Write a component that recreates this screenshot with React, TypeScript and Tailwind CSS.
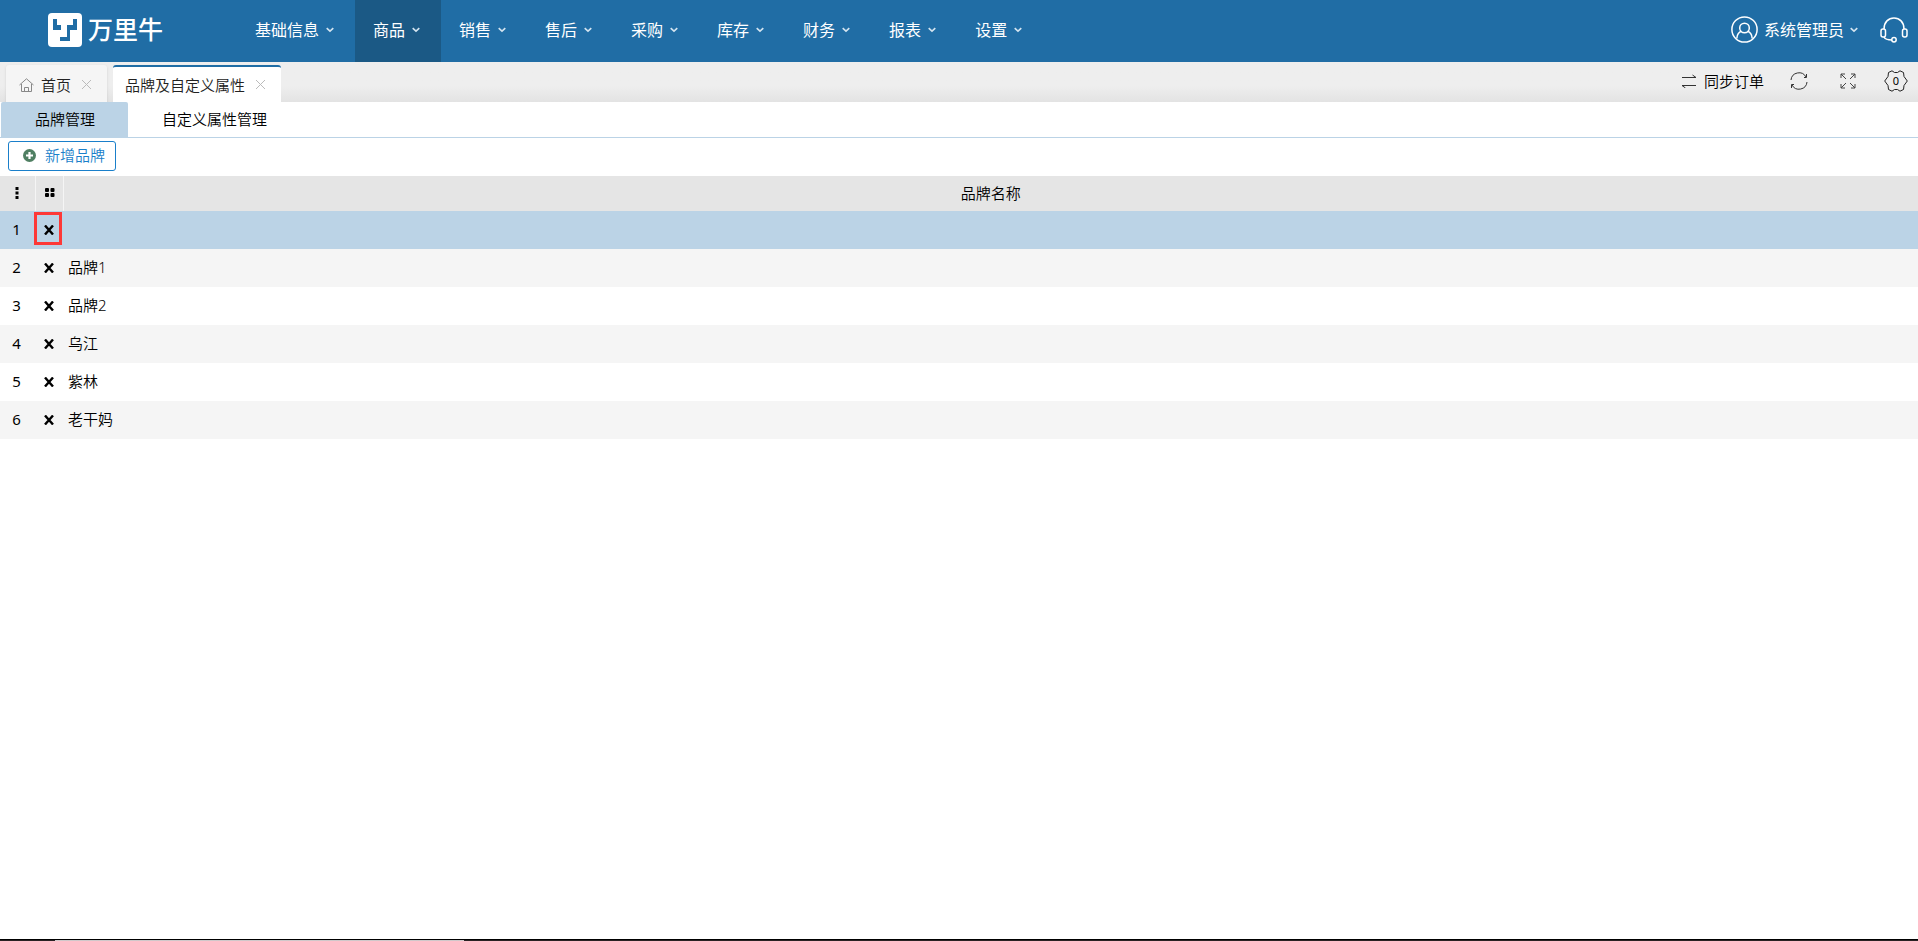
import { useState } from "react";

const NAV = ["基础信息", "商品", "销售", "售后", "采购", "库存", "财务", "报表", "设置"];
const SUB_TABS = ["品牌管理", "自定义属性管理"];
const BRANDS = ["", "品牌1", "品牌2", "乌江", "紫林", "老干妈"];

export default function App() {
  const [selected, setSelected] = useState(0);
  const [subTab, setSubTab] = useState(SUB_TABS[0]);

  return (
    <div className="flex min-h-screen flex-col bg-white font-['Noto_Sans','Noto_Sans_CJK_SC',sans-serif] text-[15px] leading-5 font-[350] text-black">
      <Header />
      <PageTabs />

      <div className="flex border-b border-[#bbd3e6] pl-px">
        {SUB_TABS.map((name) => (
          <button
            key={name}
            type="button"
            onClick={() => setSubTab(name)}
            className={
              name === subTab
                ? "h-[35px] rounded-t-xs bg-[#bbd3e6] pr-[33px] pb-[2px] pl-[34px]"
                : "h-[35px] pr-[33px] pb-[2px] pl-[34px]"
            }
          >
            {name}
          </button>
        ))}
      </div>

      <div className="px-2 pt-[3px] pb-[5px]">
        <button
          type="button"
          className="flex h-[30px] items-center gap-[9px] rounded-[3px] border border-[#1a7fca] pr-[10px] pb-[2px] pl-[14px] text-[#1a7fca]"
        >
          <PlusIcon />
          新增品牌
        </button>
      </div>

      <table className="w-full table-fixed border-collapse">
        <colgroup>
          <col className="w-[35px]" />
          <col className="w-7" />
          <col />
        </colgroup>
        <thead>
          <tr className="h-[35px] bg-[#e5e5e5]">
            <th className="border-r border-[#f5f5f5] pr-px pb-[2px]">
              <DotsIcon />
            </th>
            <th className="border-r border-[#f5f5f5] pb-[2px] pl-[2px]">
              <GridIcon />
            </th>
            <th className="pb-[2px] font-[350]">品牌名称</th>
          </tr>
        </thead>
        <tbody>
          {BRANDS.map((brand, i) => (
            <tr
              key={`brand-${i}`}
              onClick={() => setSelected(i)}
              className={
                i === selected ? "h-[38px] bg-[#bbd3e6]" : "h-[38px] odd:bg-white even:bg-[#f5f5f5]"
              }
            >
              <td className="pr-[2px] pb-[2px] text-center font-normal">{i + 1}</td>
              <td className="pb-[3px]">
                <DeleteButton marked={i === 0} />
              </td>
              <td className="pb-[2px] pl-[5px]">{brand}</td>
            </tr>
          ))}
        </tbody>
      </table>

      <div className="mt-auto h-[2px] border-t border-black bg-[#2a2224] pl-[55px]">
        <div className="h-px w-[409px] bg-[#d0c8ca]" />
      </div>
    </div>
  );
}

function Header() {
  return (
    <header className="flex h-[62px] items-stretch bg-[#206da5] text-base font-normal text-white">
      <a href="#" className="flex w-[237px] items-center gap-[6px] pb-[2px] pl-12">
        <LogoIcon />
        <span className="pb-[2px] text-[25px] leading-8 font-medium">万里牛</span>
      </a>
      <nav className="flex">
        {NAV.map((name) => (
          <button
            key={name}
            type="button"
            className={
              name === "商品"
                ? "flex items-center gap-[7px] bg-[#1b5985] pr-[21px] pb-[2px] pl-[18px]"
                : "flex items-center gap-[7px] pr-[21px] pb-[2px] pl-[18px]"
            }
          >
            {name}
            <Chevron />
          </button>
        ))}
      </nav>
      <div className="ml-auto flex items-center gap-[22px] pr-[10px] pb-[3px]">
        <button type="button" className="flex items-center gap-[6px]">
          <UserIcon />
          系统管理员
          <Chevron />
        </button>
        <button type="button" aria-label="客服">
          <HeadsetIcon />
        </button>
      </div>
    </header>
  );
}

function PageTabs() {
  return (
    <div className="flex h-10 items-end bg-linear-to-b from-[#eeeeee] from-60% to-[#e3e3e3] pl-[6px]">
      <div className="flex h-[37px] items-center rounded-t-[3px] bg-[#f5f5f5] pt-[2px] pr-[15px] pl-[13px] text-[#222] shadow-sm">
        <HomeIcon />
        <a href="#" className="mr-[10px] ml-[7px]">
          首页
        </a>
        <CloseIcon label="关闭首页" />
      </div>
      <div className="ml-[6px] flex h-[37px] items-center rounded-t-[3px] border-t-2 border-[#206da5] bg-white pr-[15px] pl-3 text-[#222]">
        <a href="#" className="mr-[10px]">
          品牌及自定义属性
        </a>
        <CloseIcon label="关闭品牌及自定义属性" />
      </div>
      <div className="ml-auto flex h-10 items-center pr-[10px] pb-[2px]">
        <button type="button" className="flex items-center gap-[7px]">
          <SyncIcon />
          同步订单
        </button>
        <button type="button" aria-label="刷新" className="ml-[26px]">
          <RefreshIcon />
        </button>
        <button type="button" aria-label="全屏" className="ml-8">
          <ExpandIcon />
        </button>
        <button type="button" className="relative ml-7">
          <GearIcon />
          <span className="absolute inset-0 flex items-center justify-center text-[11px] font-normal">
            0
          </span>
        </button>
      </div>
    </div>
  );
}

function DeleteButton({ marked }: { marked: boolean }) {
  return (
    <button
      type="button"
      aria-label="删除"
      className={
        marked
          ? "-ml-px flex h-[33px] w-7 items-center justify-center border-3 border-[#fd3837] pt-[3px] pl-[2px]"
          : "-ml-px flex h-[33px] w-7 items-center justify-center pt-[3px] pl-[2px]"
      }
    >
      <svg width="10" height="10" viewBox="0 0 10 10" stroke="currentColor" strokeWidth="2.4">
        <path d="M1 .5l8 9M9 .5l-8 9" />
      </svg>
    </button>
  );
}

function CloseIcon({ label }: { label: string }) {
  return (
    <button type="button" aria-label={label}>
      <svg width="11" height="11" viewBox="0 0 11 11" stroke="#bbb">
        <path d="M1 1l9 9M10 1l-9 9" />
      </svg>
    </button>
  );
}

function LogoIcon() {
  return (
    <svg width="34" height="34" viewBox="0 0 34 34">
      <rect width="34" height="34" rx="4" fill="#fff" />
      <path d="M5 6h4v6h4v5H5zM25 6h4v11h-7v11H12v-4h7V12h6z" fill="#206da5" />
    </svg>
  );
}

function Chevron() {
  return (
    <svg width="8" height="6" viewBox="0 0 8 6" fill="none" stroke="#d4e4f0" strokeWidth="1.6">
      <path d="M.7 1.2L4 4.2l3.3-3" />
    </svg>
  );
}

function UserIcon() {
  return (
    <svg width="27" height="27" viewBox="0 0 27 27" fill="none" stroke="#fff" strokeWidth="1.5">
      <circle cx="13.5" cy="13.5" r="12.6" />
      <circle cx="13.5" cy="12" r="4.8" />
      <path d="M5.8 22.5c.3-4 2.200-6.500 4.700-7.200M21.200 22.500c-.3-4-2.200-6.500-4.700-7.200" />
    </svg>
  );
}

function HeadsetIcon() {
  return (
    <svg width="28" height="26" viewBox="0 0 28 26" fill="none" stroke="#fff" strokeWidth="1.5">
      <path d="M4 12C4 5 8.500 1 14 1s10 4 10 11" />
      <rect x="1" y="12" width="4.5" height="8" rx="2" />
      <rect x="22.5" y="12" width="4.5" height="8" rx="2" />
      <path d="M4 20c1 2.500 4 3 8 3" />
      <circle cx="14" cy="22.8" r="2.2" />
    </svg>
  );
}

function HomeIcon() {
  return (
    <svg width="15" height="14" viewBox="0 0 15 14" fill="none" stroke="#888">
      <path d="M.5 7L7.500.8 14.500 7M2.500 6v7.500h10V6M5.500 13.500v-4h4v4" />
    </svg>
  );
}

function PlusIcon() {
  return (
    <svg width="13" height="13" viewBox="0 0 13 13">
      <circle cx="6.5" cy="6.5" r="6.5" fill="#4f7f62" />
      <path d="M6.500 3v7M3 6.500h7" stroke="#fff" strokeWidth="2.2" />
    </svg>
  );
}

function DotsIcon() {
  return (
    <svg width="4" height="12" viewBox="0 0 4 12" className="mx-auto">
      <path d="M.5 0h3v3h-3zM.5 4.500h3v3h-3zM.5 9h3v3h-3z" />
    </svg>
  );
}

function GridIcon() {
  return (
    <svg width="10" height="9" viewBox="0 0 10 9" className="mx-auto">
      <rect y="0" width="4" height="4" rx="1" />
      <rect x="5.5" y="0" width="4" height="4" rx="1" />
      <rect y="5" width="4" height="4" rx="1" />
      <rect x="5.5" y="5" width="4" height="4" rx="1" />
    </svg>
  );
}

function SyncIcon() {
  return (
    <svg width="16" height="14" viewBox="0 0 16 14" fill="none" stroke="#333">
      <path d="M1 3.500h14l-3.500-2.500M15 11.500H1l3.500 2.500" />
    </svg>
  );
}

function RefreshIcon() {
  return (
    <svg width="18" height="18" viewBox="0 0 18 18" fill="none" stroke="#333">
      <path d="M1 8A8 8 0 0 1 16 5M16.500 2v3.500H14M17 10A8 8 0 0 1 2 13M1.500 16v-3.500H4" />
    </svg>
  );
}

function ExpandIcon() {
  return (
    <svg width="16" height="16" viewBox="0 0 16 16" fill="none" stroke="#444">
      <path d="M1 5V1h4M1 1l5 5M11 1h4v4M15 1l-5 5M1 11v4h4M1 15l5-5M15 11v4h-4M15 15l-5-5" />
    </svg>
  );
}

function GearIcon() {
  return (
    <svg width="24" height="22" viewBox="0 0 24 22" fill="none" stroke="#222">
      <path d="M.7 11L4 6.500 4.500 2.500 8 .8l2.500 1.700h3L16 .8l3.500 1.700.5 4 3.300 4.500-3.300 4.500-.5 4-3.500 1.700-2.500-1.700h-3L8 21.200l-3.500-1.700-.5-4z" />
    </svg>
  );
}
